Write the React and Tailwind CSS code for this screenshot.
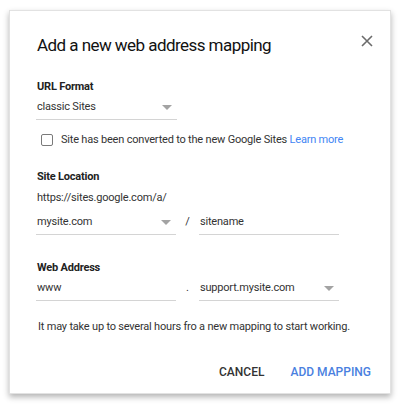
import React from "react";

function Caret() {
  return (
    <svg width="10" height="5" viewBox="0 0 10 5" className="shrink-0">
      <path d="M0 0 L10 0 L5 5 Z" fill="#a3a3a3" />
    </svg>
  );
}

function Field({ children, caret, width = "w-[140px]" }) {
  return (
    <div className={`${width} h-[25px] flex items-center justify-between border-b border-[#d4d4d4] pl-[1px] pr-[5px]`}>
      <span className="text-[11px] tracking-[-0.2px] text-[#333]">{children}</span>
      {caret && <Caret />}
    </div>
  );
}

function Label({ children, className = "" }) {
  return (
    <div className={`h-[16px] flex items-center text-[11px] tracking-[-0.2px] font-bold text-[#222] pl-[1px] ${className}`}>
      {children}
    </div>
  );
}

export default function App() {
  return (
    <div className="w-[400px] h-[417px] bg-white pt-[10px] pl-[9px]" style={{ fontFamily: "Roboto, 'Liberation Sans', sans-serif" }}>
      <div className="w-[382px] h-[384px] bg-white border border-[#e2e2e2] shadow-[0_3px_6px_rgba(0,0,0,0.3)] pl-[26px] pr-[19px] pt-[24px] relative">
        {/* close */}
        <button className="absolute right-[17px] top-[24px] w-[12px] h-[12px]">
          <svg width="12" height="12" viewBox="0 0 12 12">
            <path d="M1 1 L11 11 M11 1 L1 11" stroke="#6b6b6b" strokeWidth="1.6" />
          </svg>
        </button>

        <h1 className="h-[22px] flex items-center text-[17px] tracking-[-0.55px] text-[#111] pl-[1px]">Add a new web address mapping</h1>

        <Label className="mt-[22px]">URL Format</Label>
        <Field caret width="w-[141px]">classic Sites</Field>

        <div className="mt-[11px] h-[18px] flex items-center">
          <div className="ml-[5px] w-[12px] h-[12px] border-[1.5px] border-[#7a7a7a] rounded-[2px]" />
          <span className="ml-[8px] text-[11px] tracking-[-0.2px] text-[#333]">
            Site has been converted to the new Google Sites{" "}
            <span className="text-[#4285f4]">Learn more</span>
          </span>
        </div>

        <Label className="mt-[20px]">Site Location</Label>
        <div className="mt-[5px] h-[16px] flex items-center text-[11px] tracking-[-0.2px] text-[#333] pl-[1px]">https://sites.google.com/a/</div>

        <div className="mt-[4px] flex items-end">
          <Field caret>mysite.com</Field>
          <div className="w-[23px] h-[25px] flex items-center justify-center text-[11px] text-[#333]">/</div>
          <Field>sitename</Field>
        </div>

        <Label className="mt-[25px]">Web Address</Label>
        <div className="flex items-end">
          <Field>www</Field>
          <div className="w-[23px] h-[25px] flex items-center justify-center text-[11px] text-[#333]">.</div>
          <Field caret>support.mysite.com</Field>
        </div>

        <p className="mt-[18px] h-[16px] flex items-center text-[11px] tracking-[-0.2px] text-[#333] pl-[2px]">
          It may take up to several hours fro a new mapping to start working.
        </p>

        <div className="mt-[27px] h-[20px] flex items-center justify-end gap-[26px]">
          <button className="text-[12px] font-medium text-[#333]">CANCEL</button>
          <button className="text-[12px] font-medium text-[#4a7fe0]">ADD MAPPING</button>
        </div>
      </div>
    </div>
  );
}
